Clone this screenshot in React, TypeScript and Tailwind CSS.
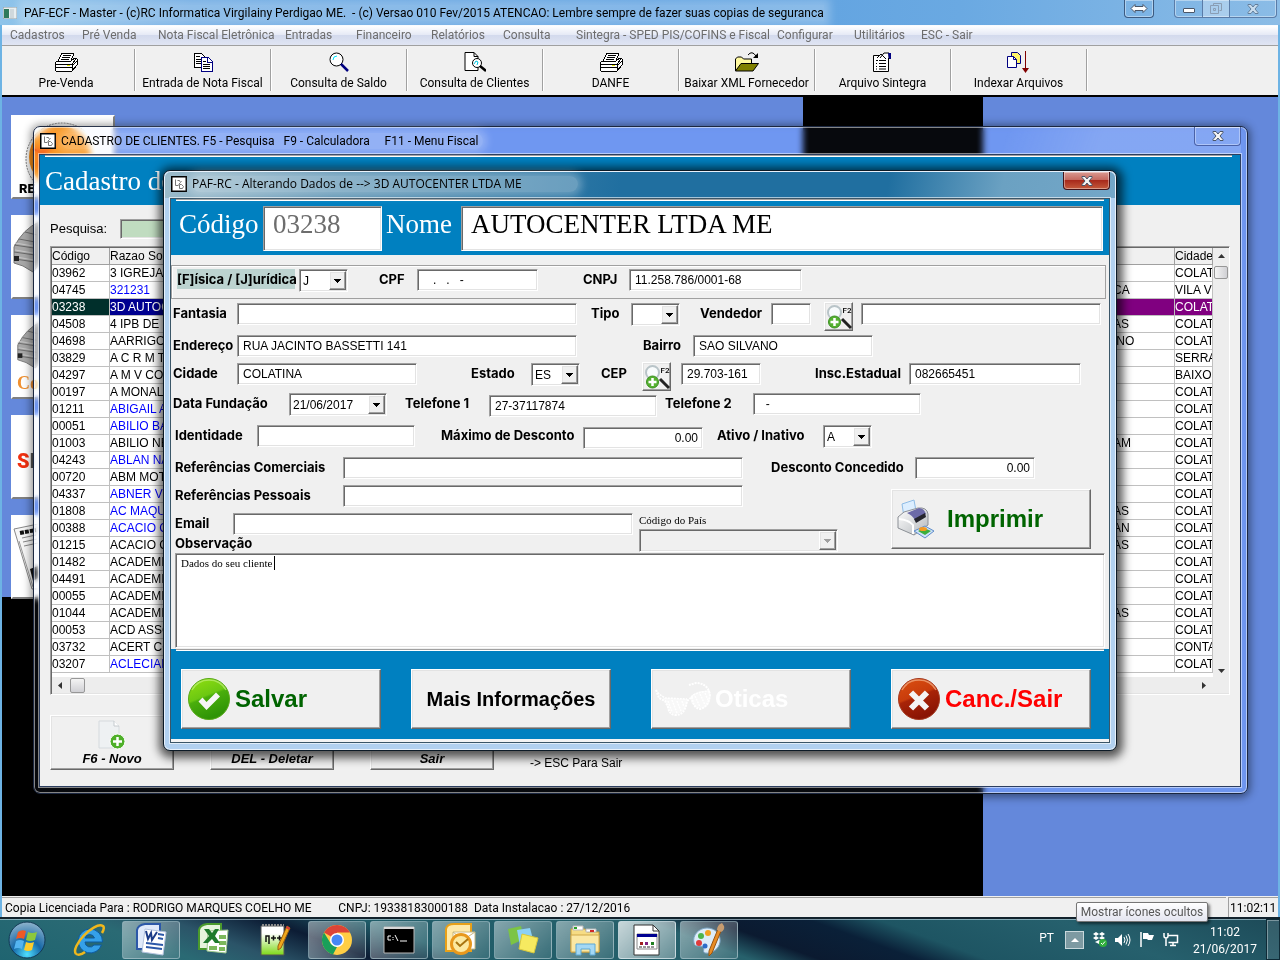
import { useId, type ReactNode } from "react";

const menu: [string, string][] = [
  ["Cadastros", "w-[72px]"],
  ["Pré Venda", "w-[76px]"],
  ["Nota Fiscal Eletrônica", "w-[127px]"],
  ["Entradas", "w-[71px]"],
  ["Financeiro", "w-[75px]"],
  ["Relatórios", "w-[72px]"],
  ["Consulta", "w-[73px]"],
  ["Sintegra - SPED PIS/COFINS e Fiscal", "w-[201px]"],
  ["Configurar", "w-[77px]"],
  ["Utilitários", "w-[67px]"],
  ["ESC - Sair", "w-[72px]"],
];

type Row = { codigo: string; razao: string; azul?: boolean; fim?: string; cidade?: string };

const rows: Row[] = [
  { codigo: "03962", razao: "3 IGREJA" },
  { codigo: "04745", razao: "321231", azul: true, fim: "CA", cidade: "VILA VE" },
  { codigo: "03238", razao: "3D AUTOC" },
  { codigo: "04508", razao: "4 IPB DE", fim: "AS" },
  { codigo: "04698", razao: "AARRIGO", fim: "INO" },
  { codigo: "03829", razao: "A C R M T", cidade: "SERRA" },
  { codigo: "04297", razao: "A M V COM", cidade: "BAIXO" },
  { codigo: "00197", razao: "A MONALI" },
  { codigo: "01211", razao: "ABIGAIL A", azul: true },
  { codigo: "00051", razao: "ABILIO BA", azul: true },
  { codigo: "01003", razao: "ABILIO NE", fim: "AM" },
  { codigo: "04243", razao: "ABLAN NA", azul: true },
  { codigo: "00720", razao: "ABM MOTO" },
  { codigo: "04337", razao: "ABNER VI", azul: true },
  { codigo: "01808", razao: "AC MAQU", azul: true, fim: "AS" },
  { codigo: "00388", razao: "ACACIO C", azul: true, fim: "AN" },
  { codigo: "01215", razao: "ACACIO G", fim: "AS" },
  { codigo: "01482", razao: "ACADEMIA" },
  { codigo: "04491", razao: "ACADEMIA" },
  { codigo: "00055", razao: "ACADEMIA" },
  { codigo: "01044", razao: "ACADEMIA", fim: "AS" },
  { codigo: "00053", razao: "ACD ASSO" },
  { codigo: "03732", razao: "ACERT CO", cidade: "CONTA" },
  { codigo: "03207", razao: "ACLECIAN", azul: true },
];

const sunken =
  "border border-t-[#a0a0a0] border-l-[#a0a0a0] border-b-white border-r-white shadow-[inset_1px_1px_0_#696969,inset_-1px_-1px_0_#e3e3e3]";
const raised =
  "border border-t-white border-l-white border-b-[#696969] border-r-[#696969] bg-[#f0f0f0] shadow-[inset_-1px_-1px_0_#a0a0a0,inset_1px_1px_0_#e3e3e3]";

/* ---------- toolbar icons ---------- */

const PrinterIcon = () => (
  <svg width="24" height="20" viewBox="0 0 24 20" shapeRendering="crispEdges">
    <path d="M8 1h12l-3 8H4z" fill="#fff" stroke="#000" />
    <path d="M9 3.500h8M8 5.500h8M7 7.500h8" stroke="#000" />
    <path d="M3 9h14l4-3 2 1v6l-5 6H2l-1-1v-7z" fill="#fff" stroke="#000" />
    <path d="M1 12h17l4-5M2 15h16M18 12v7M19 13l4-4" stroke="#000" fill="none" />
    <path d="M13 13h3v1h-3z" fill="#e8e800" />
  </svg>
);
const CopyIcon = () => (
  <svg width="20" height="20" viewBox="0 0 20 20" shapeRendering="crispEdges">
    <path d="M1 1h7l3 3v11H1z" fill="#fff" stroke="#000" />
    <path d="M3 4h4M3 7h5M3 9h5M3 11h5" stroke="#000" />
    <path d="M8 5h7l4 4v10H8z" fill="#fff" stroke="#000080" />
    <path d="M14 5v5h5" fill="none" stroke="#000080" />
    <path d="M10 9h3M10 12h7M10 14h7M10 16h7" stroke="#000" />
  </svg>
);
const LensIcon = () => (
  <svg width="20" height="20" viewBox="0 0 20 20">
    <circle cx="7.500" cy="7.500" r="6.500" fill="#fff" stroke="#000" />
    <path d="M4 8l1-3 3-1" stroke="#00e5ff" fill="none" />
    <path d="M12 12l7 7" stroke="#000080" strokeWidth="2.500" />
  </svg>
);
const DocLensIcon = () => (
  <svg width="22" height="20" viewBox="0 0 22 20">
    <path d="M1 .5h9l4 4v14H1z" fill="#fff" stroke="#000" />
    <path d="M10 .5v4h4" fill="none" stroke="#000" />
    <circle cx="13" cy="11" r="4.500" fill="#fff" stroke="#000" />
    <path d="M10 12l2-3 2 1-1 3" stroke="#00c5e0" fill="none" />
    <path d="M16 14l6 5" stroke="#000" strokeWidth="2.500" />
  </svg>
);
const FolderIcon = () => (
  <svg width="24" height="20" viewBox="0 0 24 20">
    <path d="M.5 19V7l2-2h4l2 2h8v4" fill="#fff9a0" stroke="#000" />
    <path d="M.5 19L6 11.500h17.500L18 19z" fill="#808000" stroke="#000" />
    <path d="M13 3q4-5 8 1" fill="none" stroke="#000" />
    <path d="M23 1v5h-5z" fill="#000" />
  </svg>
);
const SheetIcon = () => (
  <svg width="19" height="20" viewBox="0 0 19 20">
    <path d="M.5 3.500h15v16H.5z" fill="#fff" stroke="#000" />
    <path d="M3 8.500h2M6 8.500h7M3 11.500h1M6 11.500h7M3 14.500h1M6 14.500h7M3 17h1M6 17h7" stroke="#000" />
    <path d="M4 6l4-4 5 5M7 6l4-5h5v5" fill="#fff" stroke="#000" />
    <path d="M15 1h3v6h-2z" fill="#000080" />
  </svg>
);
const IndexIcon = () => (
  <svg width="23" height="22" viewBox="0 0 23 22">
    <path d="M4.500 1.500h6l3 3v8h-9z" fill="#fff568" stroke="#000080" />
    <path d="M.5 5.500h6l3 3v8h-9z" fill="#fff" stroke="#000080" />
    <path d="M6.500 5.500v3h3" fill="none" stroke="#000080" />
    <path d="M18.500 0v17" stroke="#800000" />
    <path d="M15 17h7l-3.500 5z" fill="#800000" />
  </svg>
);

const tools: { label: string; icon: ReactNode }[] = [
  { label: "Pre-Venda", icon: <PrinterIcon /> },
  { label: "Entrada de Nota Fiscal", icon: <CopyIcon /> },
  { label: "Consulta de Saldo", icon: <LensIcon /> },
  { label: "Consulta de Clientes", icon: <DocLensIcon /> },
  { label: "DANFE", icon: <PrinterIcon /> },
  { label: "Baixar XML Fornecedor", icon: <FolderIcon /> },
  { label: "Arquivo Sintegra", icon: <SheetIcon /> },
  { label: "Indexar Arquivos", icon: <IndexIcon /> },
];

/* ---------- window icons ---------- */

const FormIcon = () => (
  <svg width="16" height="16" viewBox="0 0 16 16" className="shrink-0">
    <rect x=".75" y=".75" width="14.500" height="14.500" fill="#fff" stroke="#000" strokeWidth="1.500" />
    <path d="M4.500 3.500v6h3M6.500 4.500h2l1 2-2 2M8.500 8.500h2l2 2-1 2h-3z" fill="none" stroke="#777" />
    <path d="M10 5l1 1" stroke="#aaa" />
  </svg>
);
const CloseGlyph = () => (
  <svg width="12" height="10" viewBox="0 0 12 10">
    <path d="M1 .5h3l2 2.500 2-2.500h3v1L8 5l3 3.500v1H8L6 7 4 9.500H1v-1L4 5 1 1.500z" fill="#f4f4f4" stroke="#4a5668" />
  </svg>
);

/* ---------- dialog icons ---------- */

const SearchAddIcon = () => (
  <svg width="26" height="26" viewBox="0 0 26 26" className="shrink-0">
    <circle cx="8.500" cy="8.500" r="6.500" fill="#f8fbfc" stroke="#b9c4c8" strokeWidth="2" />
    <path d="M16 15l9 9" stroke="#222" strokeWidth="3" />
    <circle cx="8.500" cy="18" r="6" fill="#55b030" stroke="#3a9020" />
    <path d="M8.500 14v8M4.500 18h8" stroke="#fff" strokeWidth="2.500" />
    <text x="16.500" y="9" fontSize="8" fontWeight="500" fontFamily="Roboto, sans-serif" fill="#000">F2</text>
  </svg>
);
const CheckIcon = () => (
  <svg width="42" height="42" viewBox="0 0 42 42">
    <defs>
      <linearGradient id="okFill" x1="0" y1="0" x2=".4" y2="1">
        <stop offset="0" stopColor="#93e010" />
        <stop offset=".5" stopColor="#6cc812" />
        <stop offset=".55" stopColor="#4aae0c" />
        <stop offset="1" stopColor="#2f9406" />
      </linearGradient>
    </defs>
    <circle cx="21" cy="21" r="20.500" fill="url(#okFill)" stroke="#58a818" />
    <path d="M4 12a19.500 19.500 0 0 1 34 0" fill="none" stroke="#c0f07a" strokeWidth="1.500" opacity=".7" />
    <path d="M10.500 23.500l4-4 4 4.500 9.500-9.500 4 4-13.500 13.500z" fill="#f6f6f6" />
  </svg>
);
const CancelIcon = () => (
  <svg width="42" height="42" viewBox="0 0 42 42">
    <defs>
      <linearGradient id="noFill" x1="0" y1="0" x2=".4" y2="1">
        <stop offset="0" stopColor="#dc5010" />
        <stop offset=".5" stopColor="#c83c0c" />
        <stop offset=".55" stopColor="#a82408" />
        <stop offset="1" stopColor="#8a1404" />
      </linearGradient>
    </defs>
    <circle cx="21" cy="21" r="20.500" fill="url(#noFill)" stroke="#a43a20" />
    <path d="M4 12a19.500 19.500 0 0 1 34 0" fill="none" stroke="#f4b48c" strokeWidth="1.500" opacity=".7" />
    <path d="M13 14.500l16 16M29 14.500L13 30.500" stroke="#f4f4f4" strokeWidth="6" />
  </svg>
);
const GlassesIcon = () => (
  <svg width="58" height="36" viewBox="0 0 58 36" fill="none" stroke="#fff">
    <path d="M8 17l24 1 0 6q-4 8-10 9-8 0-10-9zM36 15q6-6 19-5 2 14-6 17-8 2-13-6z" fill="#fff" fillOpacity=".55" stroke="none" />
    <path d="M1 9l3 8 6 3 3 6q1 8 8 8 9 0 11-14l5-4q1 11 8 12 9-2 10-15L53 8q-4-6-12-6l-7 2" strokeWidth="2" strokeDasharray="2 1" />
    <path d="M1 9l3 4 6 4 22 1M36 16q5-5 19-6" strokeWidth="1.500" strokeDasharray="2 1" />
    <path d="M13 20l4 11M17 19l5 13M22 20l4 10M27 20l2 6M40 15l5 11M45 13l5 11M50 12l3 7" strokeWidth="1.500" strokeDasharray="2 1" />
  </svg>
);
const PrinterColorIcon = () => (
  <svg width="38" height="40" viewBox="0 0 38 40">
    <defs>
      <linearGradient id="prBody" x1="0" y1="0" x2="1" y2="1">
        <stop offset="0" stopColor="#fff" />
        <stop offset="1" stopColor="#b4b8bc" />
      </linearGradient>
    </defs>
    <path d="M5 5l12-4 2 11-12 6z" fill="#dceeff" stroke="#8fbce6" />
    <path d="M1 18l6-5 14-4q9-1 10 6v11l-14 10-16-7z" fill="url(#prBody)" stroke="#8c9096" />
    <path d="M10 14l12-5q5 0 7 6l-11 6q-3-5-8-7z" fill="#6c6aa8" />
    <path d="M17 20l11-6 1 4-10 6z" fill="#25252d" />
    <path d="M2 20q10 1 14 6v9" fill="none" stroke="#fff" strokeWidth="2" />
    <path d="M17 32l11-5 9 5-9 7z" fill="#cfe2fa" stroke="#5e8cc8" />
    <path d="M21 32l6-3 7 3-6 4z" fill="#3cae3c" />
    <ellipse cx="26" cy="30" rx="4" ry="2" fill="#f49a20" />
  </svg>
);

/* ---------- form pieces ---------- */

function Field(p: { label: string; lw: string; w: string; value?: string; gap?: string; right?: boolean; drop?: boolean }) {
  const id = useId();
  return (
    <div className={`flex shrink-0 items-start ${p.gap ?? ""}`}>
      <label htmlFor={id} className={`${p.lw} h-5 shrink-0 whitespace-nowrap text-[13px] leading-5 font-bold`}>
        {p.label}
      </label>
      <input
        id={id}
        defaultValue={p.value}
        className={`${p.w} ${sunken} ${p.right ? "pr-1 text-right" : "pl-[5px]"} ${p.drop ? "mt-[2px]" : ""} h-[22px] bg-white font-[Liberation_Sans,sans-serif] text-xs`}
      />
    </div>
  );
}

function Pick(p: { label: string; lw: string; w: string; value?: string; gap?: string; labelClass?: string }) {
  const id = useId();
  return (
    <div className={`flex shrink-0 items-start ${p.gap ?? ""}`}>
      <label htmlFor={id} className={`${p.lw} h-5 shrink-0 whitespace-nowrap text-[13px] leading-5 font-bold ${p.labelClass ?? ""}`}>
        {p.label}
      </label>
      <Drop id={id} w={p.w} value={p.value} />
    </div>
  );
}

function Drop({ id, w, value, disabled }: { id: string; w: string; value?: string; disabled?: boolean }) {
  return (
    <div className={`relative h-[23px] ${w}`}>
      <select
        id={id}
        disabled={disabled}
        className={`h-full w-full appearance-none ${sunken} ${disabled ? "bg-[#f0f0f0]" : "bg-white"} pr-5 pl-[3px] font-[Liberation_Sans,sans-serif] text-xs leading-none`}
      >
        <option>{value ?? ""}</option>
      </select>
      <span className={`pointer-events-none absolute top-[2px] right-[2px] bottom-[2px] flex w-[17px] items-center justify-center ${raised}`}>
        <svg width="7" height="4" viewBox="0 0 7 4" shapeRendering="crispEdges">
          <path d="M0 0h7L3.500 4z" fill={disabled ? "#a0a0a0" : "#000"} />
        </svg>
      </span>
    </div>
  );
}

const SearchButton = ({ gap }: { gap: string }) => (
  <button aria-label="Pesquisar F2" className={`${gap} ${raised} -mt-px flex h-[29px] w-[29px] shrink-0 items-center justify-center`}>
    <SearchAddIcon />
  </button>
);

const BigButton = ({ children, className }: { children: ReactNode; className: string }) => (
  <button className={`flex h-[60px] w-[200px] shrink-0 items-center font-[Liberation_Sans,sans-serif] font-bold whitespace-nowrap ${raised} ${className}`}>
    {children}
  </button>
);

function EditDialog() {
  const codigo = useId();
  const nome = useId();
  const cep = useId();
  const pais = useId();
  const obs = useId();
  return (
    <section className="absolute top-[73px] left-[161px] w-[954px] rounded-[7px] border border-[#0c1a26] bg-[#b2d1f0] px-[6px] pb-[7px] shadow-[inset_0_0_0_1px_rgba(255,255,255,0.7),1px_2px_10px_5px_rgba(0,0,0,0.65)]">
      <header className="-mx-[5px] mt-px flex h-[26px] items-start rounded-t-[6px] bg-[linear-gradient(100deg,#9dbccb_0%,#5c93b3_18%,#206fa0_48%,#206fa0_76%,#6ba1c2_88%,#74a7c8_100%)] pl-[6px]">
        <div className="flex h-6 flex-1 items-center gap-[5px] font-[Open_Sans,sans-serif] text-xs">
          <FormIcon />
          <h2 className="rounded-full bg-white/30 pr-14 leading-4 whitespace-pre shadow-[0_0_8px_4px_rgba(255,255,255,0.3)]">
            {"PAF-RC - Alterando Dados de --> 3D AUTOCENTER LTDA ME"}
          </h2>
        </div>
        <button
          aria-label="Fechar"
          className="mr-[5px] flex h-[18px] w-[47px] items-center justify-center rounded-b-[4px] border border-t-0 border-[#45141a] bg-[linear-gradient(#d99a92_0%,#c66a60_45%,#a82a1c_50%,#c45a3c_100%)] shadow-[inset_0_0_0_1px_rgba(255,255,255,0.4)]"
        >
          <CloseGlyph />
        </button>
      </header>
      <div className="border border-[#3b5668] bg-[#f0f0f0] shadow-[0_0_0_1px_rgba(255,255,255,0.6)]">
        <div className="bg-[#0080c0] pb-1">
          <div className="mr-[5px] ml-[5px] h-[2px] border-t border-[#a0a0a0] bg-white" />
          <div className="flex items-start pt-[5px] pr-[6px] pl-2 font-[Liberation_Serif,serif] text-[27px]">
            <label htmlFor={codigo} className="w-[84px] leading-9 text-white">Código</label>
            <input id={codigo} defaultValue="03238" className={`h-[45px] w-[119px] ${sunken} bg-white pb-2 pl-[9px] text-[#6d6d6d]`} />
            <label htmlFor={nome} className="ml-1 w-[75px] leading-9 text-white">Nome</label>
            <input id={nome} defaultValue="AUTOCENTER LTDA ME" className={`h-[45px] min-w-0 flex-1 ${sunken} bg-white pb-2 pl-[9px]`} />
          </div>
        </div>

        <div className="font-[Inter,sans-serif]">
          <fieldset className="mt-[10px] mr-[3px] flex h-[34px] items-start border border-[#a0a0a0] pt-[3px] pl-[5px] shadow-[inset_1px_1px_0_#fff]">
            <Pick label="[F]ísica / [J]urídica" lw="w-[118px]" w="ml-1 w-[49px]" value="J" labelClass="bg-[#bcd3d0]" />
            <Field gap="ml-[31px]" label="CPF" lw="w-[38px]" w="w-[121px]" value="   .   .   -" />
            <Field gap="ml-[45px]" label="CNPJ" lw="w-[46px]" w="w-[173px]" value="11.258.786/0001-68" />
          </fieldset>

          <div className="mt-1 flex h-8 items-start pl-[2px]">
            <Field label="Fantasia" lw="w-16" w="w-[340px]" />
            <Pick gap="ml-[14px]" label="Tipo" lw="w-10" w="w-[49px]" />
            <Field gap="ml-5" label="Vendedor" lw="w-[71px]" w="w-10" />
            <SearchButton gap="ml-[13px]" />
            <input aria-label="Nome do vendedor" className={`ml-2 h-[22px] w-[240px] bg-white ${sunken}`} />
          </div>
          <div className="flex h-7 items-start pl-[2px]">
            <Field label="Endereço" lw="w-16" w="w-[340px]" value="RUA JACINTO BASSETTI 141" />
            <Field gap="ml-[66px]" label="Bairro" lw="w-[50px]" w="w-[180px]" value="SAO SILVANO" />
          </div>
          <div className="flex h-[30px] items-start pl-[2px]">
            <Field label="Cidade" lw="w-16" w="w-[180px]" value="COLATINA" />
            <Pick gap="ml-[54px]" label="Estado" lw="w-[60px]" w="w-[49px]" value="ES" />
            <label htmlFor={cep} className="ml-[21px] w-[41px] text-[13px] leading-5 font-bold">CEP</label>
            <SearchButton gap="" />
            <input id={cep} defaultValue="29.703-161" className={`ml-[10px] h-[22px] w-20 bg-white pl-[5px] font-[Liberation_Sans,sans-serif] text-xs ${sunken}`} />
            <Field gap="ml-[54px]" label="Insc.Estadual" lw="w-[94px]" w="w-[172px]" value="082665451" />
          </div>
          <div className="flex h-8 items-start pl-[2px]">
            <Pick label="Data Fundação" lw="w-[116px]" w="w-[98px]" value="21/06/2017" />
            <Field gap="ml-[18px]" label="Telefone 1" lw="w-[84px]" w="w-[168px]" value="27-37117874" drop />
            <Field gap="ml-2" label="Telefone 2" lw="w-[88px]" w="w-[168px]" value="  -" />
          </div>
          <div className="flex h-8 items-start pl-1">
            <Field label="Identidade" lw="w-[82px]" w="w-[158px]" />
            <Field gap="ml-[26px]" label="Máximo de Desconto" lw="w-[142px]" w="w-[120px]" value="0.00" right drop />
            <Pick gap="ml-[14px]" label="Ativo / Inativo" lw="w-[106px]" w="w-[49px]" value="A" />
          </div>
          <div className="flex h-7 items-start pl-1">
            <Field label="Referências Comerciais" lw="w-[168px]" w="w-[400px]" />
            <Field gap="ml-7" label="Desconto Concedido" lw="w-[144px]" w="w-[120px]" value="0.00" right />
          </div>
          <div className="flex h-[68px] items-start pl-1">
            <div className="w-[716px]">
              <div className="flex h-7">
                <Field label="Referências Pessoais" lw="w-[168px]" w="w-[400px]" />
              </div>
              <div className="flex items-start">
                <div>
                  <div className="h-5">
                    <Field label="Email" lw="w-[58px]" w="w-[400px]" />
                  </div>
                  <label htmlFor={obs} className="block text-[13px] leading-5 font-bold">Observação</label>
                </div>
                <div className="ml-[6px]">
                  <label htmlFor={pais} className="block h-4 font-[Liberation_Serif,serif] text-[11px] leading-[14px]">Código do País</label>
                  <Drop id={pais} w="w-[199px]" disabled />
                </div>
              </div>
            </div>
            <BigButton className="mt-1 gap-3 pl-[5px] text-2xl text-[#006400]">
              <PrinterColorIcon />
              Imprimir
            </BigButton>
          </div>
          <div className="relative mr-1 ml-1">
            <textarea
              id={obs}
              defaultValue="Dados do seu cliente"
              className={`block h-[95px] w-full resize-none bg-white px-[5px] py-[2px] font-[Liberation_Serif,serif] text-[11px] leading-[14px] ${sunken}`}
            />
            <span className="absolute top-[3px] left-[99px] h-[14px] w-px bg-black" />
          </div>
        </div>

        <footer className="mt-px bg-[#0080c0] pb-[10px]">
          <div className="mx-[5px] h-[2px] border-t border-[#a0a0a0] bg-white" />
          <div className="flex pt-[18px] pl-[10px]">
            <BigButton className="gap-[5px] pl-[6px] text-2xl text-[#006400]">
              <CheckIcon />
              Salvar
            </BigButton>
            <BigButton className="ml-[30px] justify-center text-xl text-black">Mais Informações</BigButton>
            <BigButton className="ml-10 gap-[2px] pl-[3px] text-2xl text-white">
              <GlassesIcon />
              Oticas
            </BigButton>
            <BigButton className="ml-10 gap-[5px] pl-[6px] text-2xl text-[#ff0000]">
              <CancelIcon />
              Canc./Sair
            </BigButton>
          </div>
        </footer>
        <div className="h-[3px] bg-[#f4f4f4]" />
      </div>
    </section>
  );
}

/* ---------- client list window ---------- */

const Th = ({ children }: { children?: ReactNode }) => (
  <th className="h-4 overflow-hidden border-r border-b border-[#a0a0a0] bg-[#f0f0f0] p-0 text-left font-normal whitespace-nowrap">{children}</th>
);

function ClientsWindow() {
  const search = useId();
  const cell = "h-[17px] overflow-hidden border-r border-b border-[#c0c0c0] p-0 whitespace-nowrap";
  return (
    <section className="absolute top-[29px] right-[30px] left-[31px] rounded-[7px] border border-[#1b2740] bg-[#8ab0ff]/5 pr-[6px] pb-[6px] pl-[5px] shadow-[inset_0_0_0_1px_rgba(255,255,255,0.5),0_1px_8px_2px_rgba(0,0,0,0.45)] backdrop-blur-[3px] backdrop-brightness-110">
      <header className="flex h-[27px] items-start bg-[linear-gradient(110deg,transparent_80%,rgba(255,255,255,0.15)_88%)]">
        <div className="flex h-full flex-1 items-center gap-[5px] pl-px font-[Roboto,sans-serif] text-xs">
          <FormIcon />
          <h1 className="rounded-full bg-white/25 pr-1 leading-4 whitespace-pre shadow-[0_0_8px_4px_rgba(255,255,255,0.25)]">
            {"CADASTRO DE CLIENTES. F5 - Pesquisa   F9 - Calculadora     F11 - Menu Fiscal"}
          </h1>
        </div>
        <button aria-label="Fechar" className="flex h-[19px] w-[47px] items-center justify-center rounded-b-[4px] border border-t-0 border-[#4a62a8] shadow-[inset_0_0_0_1px_rgba(255,255,255,0.35)]">
          <CloseGlyph />
        </button>
      </header>
      <div className="border border-[#2c3e60] bg-[#f0f0f0] shadow-[0_0_0_1px_rgba(255,255,255,0.5)]">
        <div className="h-[50px] bg-[#0080c0]">
          <div className="mr-2 ml-[5px] h-[2px] border-t border-[#a0a0a0] bg-white" />
          <p className="pl-[5px] font-[Liberation_Serif,serif] text-[27px] leading-[48px] text-white">Cadastro de Clientes</p>
        </div>
        <div className="px-[10px] pb-4 font-[Liberation_Sans,sans-serif] text-xs">
          <div className="flex items-center pt-[14px]">
            <label htmlFor={search} className="w-[70px] text-[13px]">Pesquisa:</label>
            <input id={search} className={`h-5 w-[400px] bg-[#c0dcc0] ${sunken}`} />
          </div>
          <div className={`mt-[7px] flex h-[449px] flex-col ${sunken} py-px pl-px`}>
            <div className="flex min-h-0 flex-1">
              <div className="min-w-0 flex-1 overflow-hidden bg-white">
                <table className="w-full table-fixed border-separate border-spacing-0 leading-4">
                  <colgroup>
                    <col className="w-[58px]" />
                    <col />
                    <col className="w-[62px]" />
                    <col className="w-[38px]" />
                  </colgroup>
                  <thead>
                    <tr>
                      <Th>Código</Th>
                      <Th>Razao So</Th>
                      <Th />
                      <Th>Cidade</Th>
                    </tr>
                  </thead>
                  <tbody>
                    {rows.map((r) => {
                      const sel = r.codigo === "03238";
                      return (
                        <tr key={r.codigo} className={sel ? "bg-[#800080] text-white" : ""}>
                          <td className={`${cell} ${sel ? "bg-[#002f2b]" : ""}`}>{r.codigo}</td>
                          <td className={`${cell} ${sel ? "bg-[#000090]" : ""} ${r.azul ? "text-[#0000ff]" : ""}`}>{r.razao}</td>
                          <td className={cell}>{r.fim}</td>
                          <td className={cell}>{r.cidade ?? "COLAT"}</td>
                        </tr>
                      );
                    })}
                  </tbody>
                </table>
              </div>
              <div className="flex w-4 flex-col items-center justify-between bg-[#ededed] pt-[6px] pb-1">
                <div className="flex flex-col items-center gap-2">
                  <svg width="7" height="4" viewBox="0 0 7 4"><path d="M0 4h7L3.500 0z" fill="#333" /></svg>
                  <span className="h-[13px] w-[14px] rounded-[2px] border border-[#979797] bg-[linear-gradient(90deg,#f4f4f4,#d0d0d4)]" />
                </div>
                <svg width="7" height="4" viewBox="0 0 7 4"><path d="M0 0h7L3.500 4z" fill="#333" /></svg>
              </div>
            </div>
            <div className="flex h-4 items-center bg-[#ededed] pr-[23px] pl-[6px]">
              <svg width="4" height="7" viewBox="0 0 4 7"><path d="M4 0v7L0 3.500z" fill="#333" /></svg>
              <span className="ml-2 h-[15px] w-[15px] rounded-[2px] border border-[#979797] bg-[linear-gradient(#f4f4f4,#d0d0d4)]" />
              <svg width="4" height="7" viewBox="0 0 4 7" className="ml-auto"><path d="M0 0v7L4 3.500z" fill="#333" /></svg>
            </div>
          </div>
          <div className="mt-5 flex items-end gap-9 text-[13px] font-bold italic">
            <button className={`flex h-[55px] w-[124px] flex-col items-center justify-between pt-1 pb-[2px] italic ${raised}`}>
              <svg width="28" height="30" viewBox="0 0 28 30">
                <path d="M1 1h15l5 5v22H1z" fill="#eef1f3" stroke="#d5dade" />
                <path d="M16 1v5h5" fill="#fff" stroke="#c5cace" />
                <circle cx="19.500" cy="21.500" r="7.500" fill="#4fb02a" stroke="#fff" />
                <path d="M19.500 17v9M15 21.500h9" stroke="#fff" strokeWidth="2.500" />
              </svg>
              <span className="leading-4">F6 - Novo</span>
            </button>
            <button className={`flex h-[55px] w-[124px] items-end justify-center pb-[2px] italic ${raised}`}>
              <span className="leading-4">DEL - Deletar</span>
            </button>
            <button className={`flex h-[55px] w-[124px] items-end justify-center pb-[2px] italic ${raised}`}>
              <span className="leading-4">Sair</span>
            </button>
            <span className="text-xs leading-[14px] font-normal not-italic">{"-> ESC Para Sair"}</span>
          </div>
        </div>
      </div>
    </section>
  );
}

/* ---------- shortcuts behind the windows ---------- */

const Hands = () => (
  <svg width="100" height="52" viewBox="0 0 100 52">
    <path d="M1 26Q10 8 26 1h60v40H28L20 51 10 45 1 42z" fill="#a8a8a8" stroke="#777" />
    <path d="M1 24l20 3M1 31l21 3M2 38l20 3M6 18l16 3M12 11l12 3" stroke="#6a6a6a" fill="none" />
    <path d="M2 22l18 3M2 29l18 3M3 36l18 3" stroke="#c8c8c8" fill="none" />
    <path d="M1 35h5v5H1z" fill="#222" />
  </svg>
);

const cards: ReactNode[] = [
  <>
    <svg width="80" height="62" viewBox="0 0 80 62" className="ml-[10px]">
      <circle cx="39" cy="38" r="36" fill="#f2f2f2" stroke="#777" strokeDasharray="2 1" />
      <circle cx="37" cy="36" r="31" fill="#f08a18" />
      <path d="M10 28l10 4-4 12 10 8M24 14l6 8-10 10" stroke="#d01010" strokeWidth="2" fill="none" />
    </svg>
    <b className="pl-[6px] font-[Roboto,sans-serif] text-[13px] leading-3 font-black">RE</b>
  </>,
  <Hands />,
  <>
    <Hands />
    <b className="pl-1 font-[Liberation_Serif,serif] text-lg leading-7 text-[#f09030]">Co</b>
  </>,
  <b className="pt-[28px] pl-1 text-xl leading-6 font-black text-[#555]">
    <span className="text-[#f03010]">S</span>I
  </b>,
  <svg width="100" height="76" viewBox="0 0 100 76">
    <path d="M1 8L30 2h60v66H19z" fill="#f6f6f6" stroke="#888" />
    <path d="M7 12l16-3" stroke="#111" strokeWidth="4" strokeDasharray="4 1" />
    <path d="M9 17l14-3M10 21l14-3M11 25l14-3" stroke="#888" />
    <path d="M17 48l8-3v12l-5 3z" fill="#111" />
    <path d="M6 20l14 46" stroke="#999" />
  </svg>,
];

/* ---------- taskbar icons ---------- */

const Orb = () => (
  <svg width="38" height="38" viewBox="0 0 38 38">
    <defs>
      <radialGradient id="orb" cx=".5" cy=".9" r=".9">
        <stop offset="0" stopColor="#4fe0ff" />
        <stop offset=".45" stopColor="#1668a8" />
        <stop offset="1" stopColor="#8fb4cc" />
      </radialGradient>
    </defs>
    <circle cx="19" cy="19" r="18" fill="url(#orb)" stroke="#123a55" />
    <path d="M10 11q4-3 8-1l-2 8q-4-2-8 0z" fill="#ee5a24" />
    <path d="M20 11q4 2 9 0l-2 8q-5 2-9 0z" fill="#8cc83c" />
    <path d="M8 20q4-2 8 0l-2 8q-4-2-8 0z" fill="#54b4f0" />
    <path d="M18 21q4 2 8 0l-2 8q-4 2-8 0z" fill="#fccc2c" />
  </svg>
);
const IE = () => (
  <svg width="34" height="34" viewBox="0 0 34 34">
    <path d="M18 6a12 12 0 1 0 11.500 16H22a5 5 0 0 1-9-3h17.500A12.500 12.500 0 0 0 18 6zm-5 9a5 5 0 0 1 9.500 0z" fill="#35a0e8" stroke="#0d5aa0" />
    <path d="M4 31C-2 24 22-2 31 3q2 2-1 7M4 31q4 2 9-2" fill="none" stroke="#f0b81c" strokeWidth="2.500" />
  </svg>
);
const Word = () => (
  <svg width="34" height="34" viewBox="0 0 34 34">
    <path d="M3 7q1-5 8-6h15v25H3z" fill="#dfe9fa" stroke="#2c58a8" strokeWidth="2" />
    <path d="M11 6l21 3-3 23-21-3z" fill="#fff" stroke="#b4c4e0" />
    <path d="M12 20l17 2M12 24l16 2M24 11l6 1M24 15l5 1" stroke="#2c58a8" strokeWidth="2" />
    <path d="M12 8l2 8 3-6 1 7 5-8" fill="none" stroke="#1c3c88" strokeWidth="2" />
  </svg>
);
const Excel = () => (
  <svg width="34" height="34" viewBox="0 0 34 34">
    <path d="M3 7q1-5 8-6h14v25H3z" fill="#e6f4dc" stroke="#4a9a2c" strokeWidth="2" />
    <path d="M12 8l20-1-2 23-19-2z" fill="#fff" stroke="#9cc88c" />
    <path d="M23 12h7v4h-7zM23 18h7v4h-7zM13 23h8v4h-8zM23 24h6v4h-6z" fill="#7cb85c" />
    <path d="M8 6h5l3 4 3-4h4l-4 7 5 7h-5l-3-4-4 4H7l6-7z" fill="#1f7a2c" />
  </svg>
);
const Notepad = () => (
  <svg width="32" height="34" viewBox="0 0 32 34">
    <defs>
      <linearGradient id="np" x1="0" y1="0" x2="0" y2="1">
        <stop offset=".25" stopColor="#fff" />
        <stop offset="1" stopColor="#7ed818" />
      </linearGradient>
    </defs>
    <path d="M2 3h23v29H2z" fill="url(#np)" stroke="#555" />
    <path d="M3 2h22" stroke="#888" strokeWidth="2" strokeDasharray="2 1" />
    <path d="M7 19v-6h3v8M12 15h5M14.500 12.500v5M18 15h5M20.500 12.500v5" stroke="#111" fill="none" strokeWidth="1.500" />
    <path d="M28 3l3 2-9 20-3 2v-4z" fill="#f0a81c" stroke="#9c5c10" />
    <path d="M28 3l3 2-1 2-3-2z" fill="#d83c3c" />
  </svg>
);
const Chrome = () => (
  <svg width="32" height="32" viewBox="0 0 32 32">
    <circle cx="16" cy="16" r="15" fill="#ffce44" />
    <path d="M16 16L3 8.500a15 15 0 0 1 26 0H16z" fill="#dc4437" />
    <path d="M3 8.500L10 20l6 3-4 7.500A15 15 0 0 1 3 8.500z" fill="#1a9f5a" />
    <circle cx="16" cy="16" r="7" fill="#fff" />
    <circle cx="16" cy="16" r="5.500" fill="#4587f4" />
  </svg>
);
const Cmd = () => (
  <svg width="32" height="28" viewBox="0 0 32 28">
    <path d="M1 1h30v26H1z" fill="#000" stroke="#b8b8b8" />
    <path d="M1 2h30" stroke="#d8d8d8" strokeWidth="2" />
    <path d="M8 10H5v4h3M10 11v1M10 13v1M12 9l3 6M17 15h7" stroke="#fff" fill="none" />
  </svg>
);
const Outlook = () => (
  <svg width="34" height="34" viewBox="0 0 34 34">
    <path d="M2 6q1-5 8-5h17v27H2z" fill="#ffe9a8" stroke="#e8a018" strokeWidth="2" />
    <path d="M9 9h22v17H9z" fill="#fff" stroke="#c8b880" />
    <path d="M9 9l10 8L31 9" fill="none" stroke="#c8b880" />
    <circle cx="17" cy="21" r="9.500" fill="#fce9a0" stroke="#e8981c" strokeWidth="3" />
    <path d="M12 19l4 4 8-7" fill="none" stroke="#a87410" strokeWidth="2" />
  </svg>
);
const Notes = () => (
  <svg width="34" height="30" viewBox="0 0 34 30">
    <path d="M2 4l13-3 3 13-13 6z" fill="#7cc444" />
    <path d="M11 5l13-2 4 15-14 3z" fill="#8cd0f4" />
    <path d="M16 9l16 4-4 15-15-4z" fill="#f6ea60" stroke="#d8c83c" />
  </svg>
);
const Explorer = () => (
  <svg width="34" height="32" viewBox="0 0 34 32">
    <path d="M3 5h14l2 3h12v20H3z" fill="#f6dc84" stroke="#c89c34" />
    <path d="M5 2h10v4H5zM18 5h10v3H18z" fill="#fff" stroke="#bbb" />
    <path d="M6 3h3v2H6z" fill="#2aa02a" />
    <path d="M22 6h4v2h-4z" fill="#d02828" />
    <path d="M3 11h28v17H3z" fill="#fbe8a4" stroke="#d0a848" />
    <path d="M8 31V20h19v11h-5v-6h-9v6z" fill="#a4d8f4" stroke="#5ca8d4" />
  </svg>
);
const AppDoc = () => (
  <svg width="28" height="32" viewBox="0 0 28 32">
    <path d="M1 1h19l6 6v24H1z" fill="#fff" stroke="#333" />
    <path d="M20 1v6h6" fill="none" stroke="#333" />
    <path d="M4 10h20v15H4z" fill="#fff" stroke="#888" />
    <path d="M4 10h20v3H4z" fill="#000090" />
    <path d="M7 18h3v3H7z" fill="#a02020" />
    <path d="M12 18h3v3h-3z" fill="#802080" />
    <path d="M18 18h3v3h-3z" fill="#208020" />
    <path d="M6 23h16" stroke="#333" strokeDasharray="3 1" />
  </svg>
);
const Paint = () => (
  <svg width="32" height="34" viewBox="0 0 32 34">
    <path d="M14 5c8 0 14 6 13 14-1 7-8 12-15 11-3-1 0-4-2-6s-8 1-9-4C-1 12 6 5 14 5z" fill="#dcecf8" stroke="#7ca4c4" />
    <circle cx="8" cy="13" r="3" fill="#4cb44c" />
    <circle cx="15" cy="10" r="3" fill="#f0a020" />
    <circle cx="6" cy="20" r="3" fill="#e03c3c" />
    <circle cx="12" cy="23" r="2.500" fill="#2c6cc8" />
    <path d="M28 8L19 30l-3 3v-5l9-22z" fill="#e88c24" stroke="#985410" />
    <path d="M24 7q0-5 5-7l2 3q1 4-3 6z" fill="#c89c70" />
  </svg>
);

const tasks: { name: string; icon: ReactNode; open?: boolean; active?: boolean }[] = [
  { name: "Internet Explorer", icon: <IE /> },
  { name: "Word", icon: <Word />, open: true },
  { name: "Excel", icon: <Excel /> },
  { name: "Notepad++", icon: <Notepad /> },
  { name: "Chrome", icon: <Chrome />, open: true },
  { name: "Prompt", icon: <Cmd />, open: true },
  { name: "Outlook", icon: <Outlook />, open: true },
  { name: "Notas", icon: <Notes />, open: true },
  { name: "Explorer", icon: <Explorer />, open: true },
  { name: "PAF-ECF", icon: <AppDoc />, open: true, active: true },
  { name: "Paint", icon: <Paint />, open: true },
];

function Taskbar() {
  return (
    <footer className="relative flex h-[43px] shrink-0 items-center border-t-2 border-[#12222c] bg-[linear-gradient(20deg,#1f6470_0%,#2a6a74_14%,#2b5468_20%,#0c1c34_27%,#1f5c68_34%,#27616c_54%,#0b1a30_59%,#0a2038_66%,#1e5563_71%,#26606d_84%,#1d4a58_100%)] font-[Roboto,sans-serif] text-xs text-white shadow-[inset_0_1px_0_rgba(200,225,235,0.6)]">
      <button aria-label="Iniciar" className="flex w-[60px] items-center pl-2">
        <Orb />
      </button>
      <div className="flex gap-1">
        {tasks.map((t) => (
          <button
            key={t.name}
            aria-label={t.name}
            className={`flex h-[38px] w-[58px] items-center justify-center ${
              t.open
                ? t.active
                  ? "rounded-[3px] border border-[#d4e4ea]/70 bg-[linear-gradient(135deg,rgba(255,255,255,0.75),rgba(255,255,255,0.3))]"
                  : "rounded-[3px] border border-[#a4c0c8]/60 bg-[linear-gradient(135deg,rgba(255,255,255,0.45),rgba(255,255,255,0.1))]"
                : ""
            }`}
          >
            {t.icon}
          </button>
        ))}
      </div>
      <div className="ml-auto flex h-full items-center">
        <span className="mr-[11px] mb-1">PT</span>
        <button aria-label="Mostrar ícones ocultos" className="mr-2 flex h-[18px] w-[19px] items-center justify-center border border-[#c8d8dc] bg-[#7d9aa2]">
          <svg width="8" height="4" viewBox="0 0 8 4"><path d="M0 4h8L4 0z" fill="#fff" /></svg>
        </button>
        <svg width="15" height="15" viewBox="0 0 15 15" className="mr-2">
          <path d="M4 0l3 2-3 2-3-2zM10 0l3 2-3 2-3-2zM4 4l3 2-3 2-3-2zM10 4l3 2-3 2-3-2zM7 8l3 2-3 2-4-2z" fill="#fff" />
          <circle cx="11" cy="11" r="4" fill="#2fae3c" />
          <path d="M9 11l1.500 1.500L13 9.500" stroke="#fff" fill="none" />
        </svg>
        <svg width="16" height="14" viewBox="0 0 16 14" className="mr-2">
          <path d="M0 5h3l4-4v12L3 9H0z" fill="#fff" />
          <path d="M9 4q2 3 0 6M11 2.500q3 4.500 0 9M13 1q4 6 0 12" stroke="#fff" fill="none" />
        </svg>
        <svg width="16" height="15" viewBox="0 0 16 15" className="mr-2">
          <path d="M2 0v15" stroke="#fff" strokeWidth="1.500" />
          <path d="M4 1h5l1 2h5l-2 5h-4L8 7H4z" fill="#fff" />
        </svg>
        <svg width="16" height="15" viewBox="0 0 16 15" className="mr-[11px]">
          <path d="M5.500 3.500h9v7h-9M7 13.500h6M10 10v3M1 1v3q0 2 2 2V14M5 1v3q0 2-2 2" stroke="#fff" fill="none" strokeWidth="1.500" />
        </svg>
        <div className="w-[70px] pt-[2px] text-center leading-[17px]">
          11:02
          <br />
          21/06/2017
        </div>
        <button aria-label="Mostrar área de trabalho" className="ml-[6px] h-full w-[14px] border border-[#0e2a36] bg-white/10 shadow-[inset_1px_1px_0_rgba(255,255,255,0.35)]" />
      </div>
      <div role="tooltip" className="absolute top-[-17px] right-[72px] flex h-5 w-[132px] items-center justify-center rounded-[2px] border border-[#767676] bg-[linear-gradient(#fff,#e4e5f0)] text-[#575757] shadow-[2px_2px_3px_rgba(0,0,0,0.5)]">
        Mostrar ícones ocultos
      </div>
    </footer>
  );
}

export default function App() {
  return (
    <div className="flex min-h-screen flex-col bg-[#6db3e4] font-[Roboto,sans-serif] text-xs text-black">
      <header className="flex h-[25px] items-start bg-[linear-gradient(90deg,#8fc4ea_0%,#6aa8e2_15%,#5b9fe0_50%,#6aa9e2_75%,#8bbce6_100%)] pl-[3px]">
        <div className="flex h-full items-center gap-[7px]">
          <svg width="14" height="12" viewBox="0 0 14 12">
            <path d="M0 0h14v12H0z" fill="#e8eef0" stroke="#8a98a0" />
            <path d="M1 2h5v9H1z" fill="#2f7a5a" />
            <path d="M7 2h4v9H7z" fill="#cfd8dc" />
          </svg>
          <h1 className="bg-white/25 whitespace-pre shadow-[0_0_8px_6px_rgba(255,255,255,0.25)]">
            {"PAF-ECF - Master - (c)RC Informatica Virgilainy Perdigao ME.  - (c) Versao 010 Fev/2015 ATENCAO: Lembre sempre de fazer suas copias de seguranca"}
          </h1>
        </div>
        <div className="mr-[3px] ml-auto flex h-[18px] gap-5">
          <button aria-label="Redimensionar" className="flex w-[30px] items-center justify-center rounded-b-[4px] border border-t-0 border-[#3c5a80] shadow-[inset_0_0_0_1px_rgba(255,255,255,0.4)]">
            <svg width="18" height="9" viewBox="0 0 18 9"><path d="M1 4.500L5 .5v2h8v-2l4 4-4 4v-2H5v2z" fill="#fff" stroke="#4a5668" /></svg>
          </button>
          <div className="flex rounded-b-[4px] border border-t-0 border-[#5a7ca8] shadow-[inset_0_0_0_1px_rgba(255,255,255,0.4)]">
            <button aria-label="Minimizar" className="flex w-7 items-end justify-center border-r border-[#5a7ca8] pb-1">
              <span className="h-[5px] w-3 rounded-[1px] border border-[#4a5668] bg-white" />
            </button>
            <button aria-label="Restaurar" className="flex w-[27px] items-center justify-center border-r border-[#5a7ca8] bg-white/30">
              <svg width="12" height="11" viewBox="0 0 12 11" fill="none" stroke="#8a9eb4"><path d="M3.500 2.500v-2h8v7h-2M.5 2.500h8v8h-8zM3.500 5.500h2v2h-2z" /></svg>
            </button>
            <button aria-label="Fechar" className="flex w-[46px] items-center justify-center opacity-60">
              <CloseGlyph />
            </button>
          </div>
        </div>
      </header>

      <main className="mx-[2px] flex flex-1 flex-col">
        <nav className="flex h-5 items-center border-t border-[#f8fbff] bg-[linear-gradient(#fff_0%,#e6eaf6_45%,#d3daed_50%,#e0e5f3_100%)] pb-px pl-2 whitespace-nowrap text-[#6d6d6d]">
          {menu.map(([label, w]) => (
            <a key={label} href="#" className={w}>
              {label}
            </a>
          ))}
        </nav>
        <div className="flex h-[52px] border-t border-b-2 border-t-[#a0a0a0] border-b-black bg-[#f0f0f0] pt-[3px] pb-1">
          {tools.map((t, i) => (
            <button
              key={t.label}
              className={`flex flex-col items-center justify-between border-r border-[#a0a0a0] pt-[3px] shadow-[1px_0_0_#fff] ${i === 0 ? "w-[133px] pr-1" : "w-[136px]"}`}
            >
              <span className="flex h-5 items-center">{t.icon}</span>
              <span className="leading-4 whitespace-nowrap">{t.label}</span>
            </button>
          ))}
        </div>

        <div className="relative flex flex-1 items-start overflow-hidden bg-black">
          <div className="flex h-[500px] w-[801px] flex-col gap-4 bg-[#6488db] pt-[18px] pl-[9px]">
            {cards.map((c, i) => (
              <div key={i} className="flex h-[84px] w-[104px] shrink-0 flex-col overflow-hidden border-2 border-t-white border-r-[#808080] border-b-[#808080] border-l-white bg-white pt-1">
                {c}
              </div>
            ))}
          </div>
          <div className="ml-[180px] flex-1 self-stretch bg-[#6488db]" />
          <ClientsWindow />
          <EditDialog />
        </div>

        <div className="flex h-[21px] items-stretch gap-[2px] bg-[#f0f0f0] pt-px whitespace-pre">
          <div className="flex flex-1 items-center border-t border-[#a0a0a0] pl-[3px]">
            Copia Licenciada Para : RODRIGO MARQUES COELHO ME{"         "}CNPJ: 19338183000188  Data Instalacao : 27/12/2016
          </div>
          <div className="flex w-[50px] items-center border-t border-l border-[#a0a0a0] pl-px">11:02:11</div>
        </div>
      </main>
      <Taskbar />
    </div>
  );
}
